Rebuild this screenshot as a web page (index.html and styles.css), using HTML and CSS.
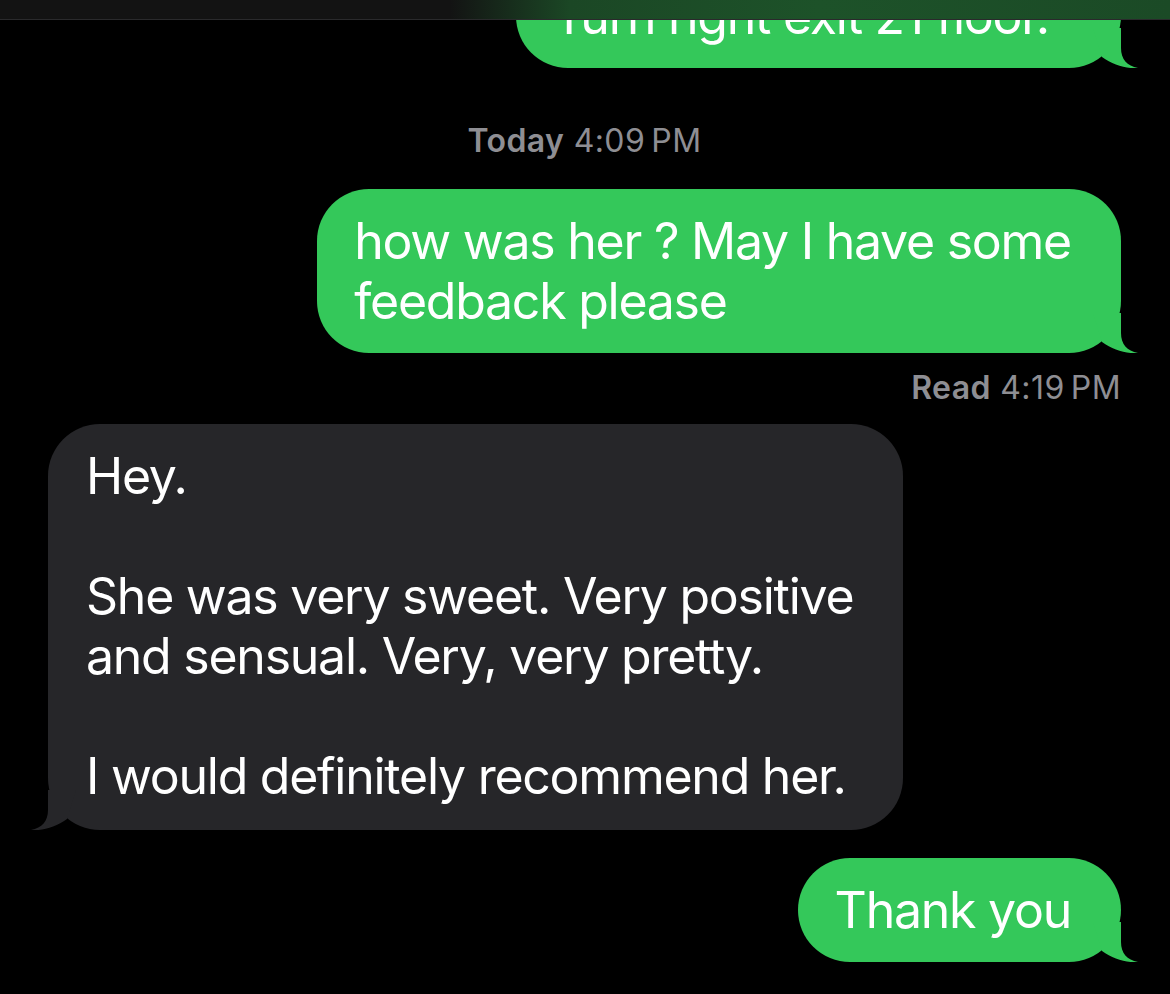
FILE: index.html
```html
<!DOCTYPE html>
<html lang="en">
<head>
    <meta charset="UTF-8">
    <meta name="viewport" content="width=device-width, initial-scale=1.0">
    <title>Messages</title>
    <link rel="stylesheet" href="styles.css">
</head>
<body>
    <!-- blurred nav bar over the scrolled thread -->
    <div class="topbar"></div>

    <main class="thread">
        <div class="bubble sent cut">
            Turn right exit 21 floor.
            <svg class="tail" viewBox="0 0 45 40"><path d="M28 0 L28 20 C28 31 34 38 45 40 C33 41 20 37 9 29 L0 0 Z"/></svg>
        </div>

        <p class="stamp"><b>Today</b> 4:09&#8239;PM</p>

        <div class="bubble sent">
            how was her ? May I have some<br>feedback please
            <svg class="tail" viewBox="0 0 45 40"><path d="M28 0 L28 20 C28 31 34 38 45 40 C33 41 20 37 9 29 L0 0 Z"/></svg>
        </div>

        <p class="status"><b>Read</b> 4:19&#8239;PM</p>

        <div class="bubble received">
            Hey.<br><br>She was very sweet. Very positive<br>and sensual. Very, very pretty.<br><br>I would definitely recommend her.
            <svg class="tail" viewBox="0 0 45 40"><path d="M28 0 L28 20 C28 31 34 38 45 40 C33 41 20 37 9 29 L0 0 Z"/></svg>
        </div>

        <div class="bubble sent last">
            Thank you
            <svg class="tail" viewBox="0 0 45 40"><path d="M28 0 L28 20 C28 31 34 38 45 40 C33 41 20 37 9 29 L0 0 Z"/></svg>
        </div>
    </main>
</body>
</html>
```

FILE: styles.css
```css
body {
    margin: 0;
    background-color: #000;
    font-family: Inter, 'Liberation Sans', sans-serif;
    color: #fff;
    overflow: hidden;
}
.topbar {
    position: fixed;
    top: 0;
    left: 0;
    right: 0;
    height: 19px;
    border-bottom: 1px solid #2a2a2c;
    background: linear-gradient(to right, #131313 0, #131313 450px, #1b4725 570px, #1d5229 820px, #1b4a26 100%);
    z-index: 2;
}
.thread {
    display: flex;
    flex-direction: column;
    padding: 0 49px 0 48px;
}
.bubble {
    position: relative;
    padding: 22px 50px 22px 37px;
    border-radius: 52px;
    font-size: 50px;
    line-height: 60px;
    letter-spacing: -1.25px;
    white-space: nowrap;
    max-width: fit-content;
}
.sent {
    align-self: flex-end;
    background-color: #34c85a;
}
.received {
    align-self: flex-start;
    background-color: #262629;
    padding-left: 38px;
    padding-bottom: 24px;
}
.cut {
    box-sizing: border-box;
    width: 605px;
    max-width: none;
    margin-top: -36px;
}
.last {
    margin-top: 28px;
}
.tail {
    position: absolute;
    bottom: 0;
    width: 45px;
    height: 40px;
}
.sent .tail {
    right: -17px;
    fill: #34c85a;
}
.received .tail {
    left: -17px;
    fill: #262629;
    transform: scaleX(-1);
}
.stamp,
.status {
    font-size: 32px;
    line-height: 40px;
    letter-spacing: 0.4px;
    color: #8e8e93;
}
.stamp b,
.status b {
    font-weight: 600;
}
.stamp {
    margin: 53px 0 28px;
    text-align: center;
}
.status {
    align-self: flex-end;
    margin: 15px 0 16px;
}
```
